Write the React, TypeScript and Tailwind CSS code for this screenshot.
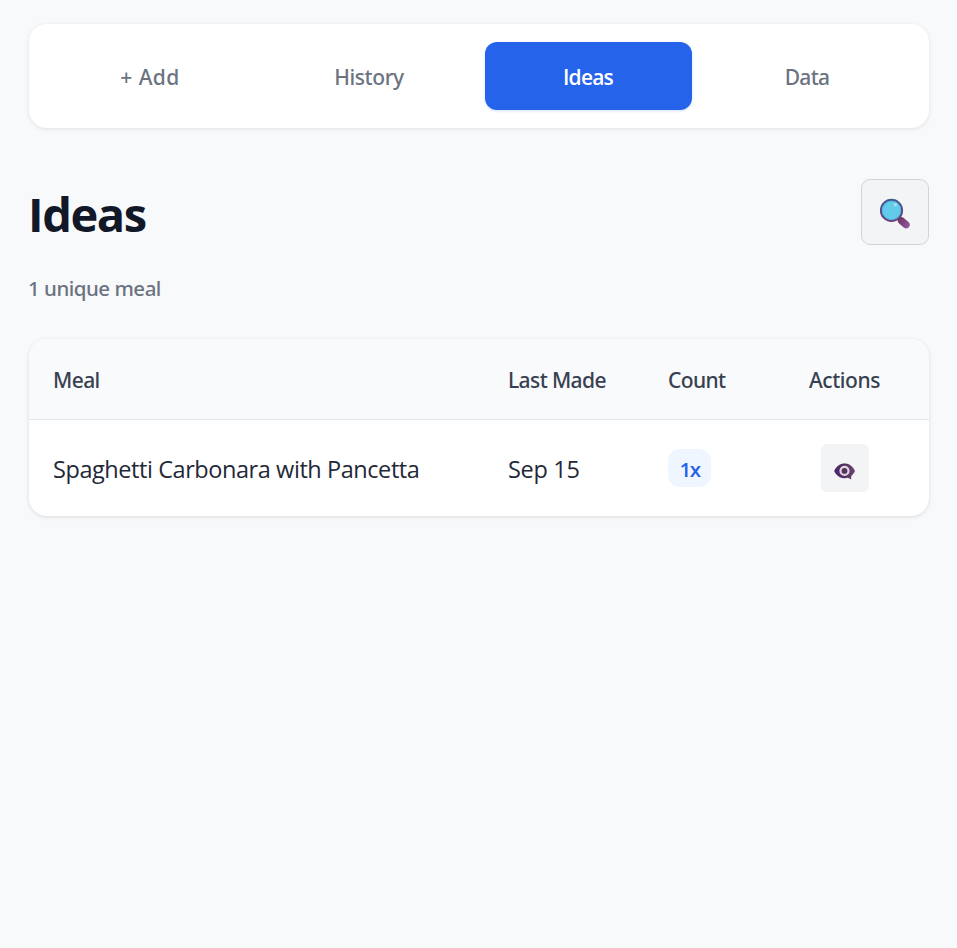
const tabs = [
  { label: '+ Add', spacing: 'tracking-[0.4px]' },
  { label: 'History', spacing: 'tracking-[-0.4px]' },
  { label: 'Ideas', spacing: "font-['Open_Sans',sans-serif] tracking-[-0.8px]", active: true },
  { label: 'Data', spacing: 'tracking-[-0.7px]' },
];

function SearchIcon() {
  return (
    <svg width="32" height="32" viewBox="0 0 32 32" fill="none" className="mt-1">
      <defs>
        <linearGradient id="handle" x1="20" y1="20" x2="30" y2="29" gradientUnits="userSpaceOnUse">
          <stop stopColor="#70345f" />
          <stop offset="1" stopColor="#93589f" />
        </linearGradient>
        <linearGradient id="rim" x1="12" y1="1" x2="12" y2="24" gradientUnits="userSpaceOnUse">
          <stop stopColor="#41598c" />
          <stop offset="1" stopColor="#703e7b" />
        </linearGradient>
      </defs>
      <path d="M19.5 20.5L23 24" stroke="#70345f" strokeWidth="3" />
      <path d="M22.4 22.7L27.1 26.8" stroke="url(#handle)" strokeWidth="7.2" strokeLinecap="round" />
      <circle cx="12.5" cy="12.4" r="10.6" fill="#62cbe9" stroke="url(#rim)" strokeWidth="2" />
      <circle cx="12.5" cy="12.4" r="9.2" stroke="#4fb2e5" strokeWidth="1" />
      <circle cx="16.5" cy="6.8" r="1.8" fill="#a5e0f2" />
    </svg>
  );
}

function EyeIcon() {
  return (
    <svg width="22" height="17" viewBox="0 0 22 17">
      <defs>
        <linearGradient id="bubble" x1="0" y1="8" x2="22" y2="8" gradientUnits="userSpaceOnUse">
          <stop stopColor="#4b246c" />
          <stop offset=".5" stopColor="#54325f" />
          <stop offset="1" stopColor="#704777" />
        </linearGradient>
      </defs>
      <path d="M.2 8C2.2 3 6.2.5 10.6.5S19 3 21 8c-.9 2.200-2.200 3.700-3.800 4.900V16.600L14 14.800C8.200 16.500 2.600 13.700.2 8Z" fill="url(#bubble)" />
      <circle cx="10.5" cy="7.9" r="4" fill="#54345f" stroke="#ddd8e0" strokeWidth="2.2" />
    </svg>
  );
}

export default function App() {
  return (
    <div className="min-h-screen bg-[#f8f9fb] pt-6 pr-7 pl-[29px] font-['Noto_Sans','Open_Sans',sans-serif] text-[21px] leading-8">
      <nav className="grid h-[104px] grid-cols-4 gap-3 rounded-[18px] bg-white p-[18px] font-medium text-[#6b7280] shadow-[0_1px_4px_rgba(0,0,0,0.1)]">
        {tabs.map((tab) => (
          <button
            key={tab.label}
            className={`rounded-xl pt-px pr-px ${tab.active ? 'bg-[#2563eb] font-semibold text-white shadow-[0_1px_3px_rgba(37,99,235,0.2)]' : ''}`}
          >
            <span className={tab.spacing}>{tab.label}</span>
          </button>
        ))}
      </nav>

      <main>
        <header className="mt-[51px] flex h-[66px] items-center justify-between">
          <h1 className="-ml-px pt-1 font-['Open_Sans',sans-serif] text-[47px] leading-[66px] font-bold tracking-[-1.4px] text-[#111827]">
            <span>Ideas</span>
          </h1>
          <button aria-label="Search" className="flex h-[66px] w-[68px] items-center justify-center rounded-[9px] border border-[#d1d5db] bg-[#f3f4f6]">
            <SearchIcon />
          </button>
        </header>
        <p className="mt-[27px] -ml-px text-[20.5px] font-medium tracking-[-0.5px] text-[#6b7280]">
          <span>1 unique meal</span>
        </p>

        <section className="mt-[35px] overflow-hidden rounded-[18px] bg-white shadow-[0_1px_4px_rgba(0,0,0,0.12)]">
          <div className="grid h-[81px] grid-cols-[455px_160px_116px_1fr] items-center border-b border-[#e2e5e9] bg-[#f9fafb] pt-px pl-6 font-medium tracking-[-0.6px] text-[#374151]">
            <div><span>Meal</span></div>
            <div><span>Last Made</span></div>
            <div><span>Count</span></div>
            <div className="pr-[24px] text-center tracking-[-0.4px]"><span>Actions</span></div>
          </div>
          <div className="grid h-24 grid-cols-[455px_160px_116px_1fr] items-center pl-6 font-['Open_Sans',sans-serif] text-[23.5px] text-[#1f2937]">
            <div className="pt-px"><span className="tracking-[-0.43px]">Spaghetti Carbonara with Pancetta</span></div>
            <div className="pt-px"><span className="tracking-[-0.3px]">Sep 15</span></div>
            <div>
              <span className="flex h-[38px] w-[43px] items-center justify-center rounded-xl bg-[#eff6ff] pt-px text-[20.5px] font-semibold tracking-[-1.4px] text-[#2563eb]">1x</span>
            </div>
            <div className="flex justify-center pr-[24px]">
              <button aria-label="View" className="flex size-12 items-center justify-center rounded-md bg-[#f3f4f6] pt-[6px]">
                <EyeIcon />
              </button>
            </div>
          </div>
        </section>
      </main>
    </div>
  );
}
